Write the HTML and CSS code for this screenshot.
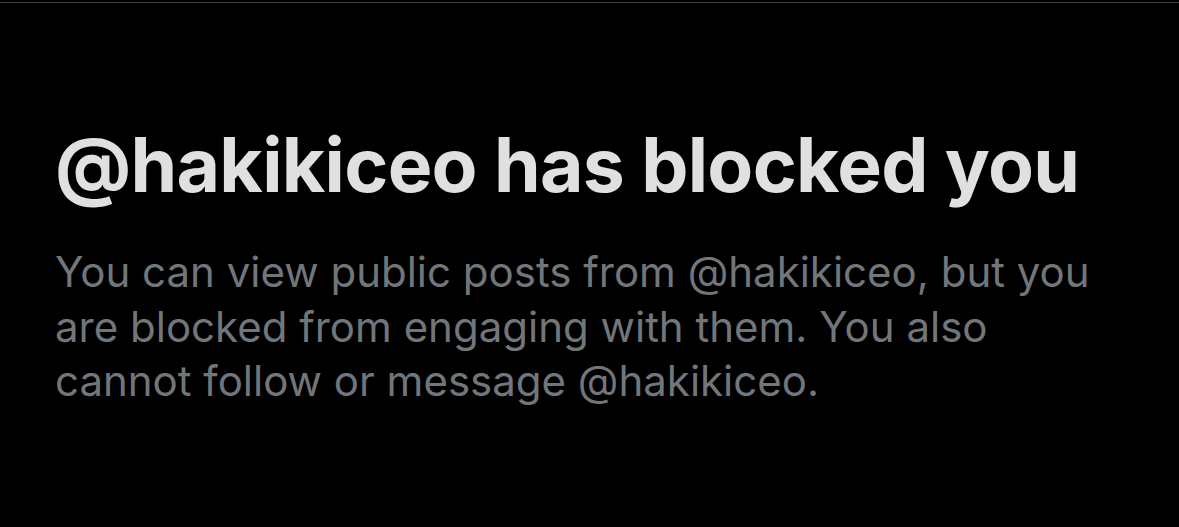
FILE: index.html
```html
<!DOCTYPE html>
<html>
<head>
<meta charset="utf-8">
<link rel="stylesheet" href="styles.css">
</head>
<body>
<div class="screen">
  <div class="divider"></div>
  <section class="blocked">
    <h1 class="title">@hakikiceo has blocked you</h1>
    <p class="desc">You can view public posts from @hakikiceo, but you are blocked from engaging with them. You also cannot follow or message @hakikiceo.</p>
  </section>
</div>
</body>
</html>
```
FILE: styles.css
```css
html, body {
  margin: 0;
  padding: 0;
  background: #000;
}
.screen {
  width: 1179px;
  height: 527px;
  background: #000;
  overflow: hidden;
  padding-top: 2px;
  box-sizing: border-box;
}
.divider {
  height: 1px;
  background: #3d3d40;
}
.blocked {
  padding: 117px 40px 0 55px;
}
.title {
  margin: 0;
  font-family: Inter, "Noto Sans", sans-serif;
  font-weight: 700;
  font-size: 75px;
  line-height: 90px;
  letter-spacing: -0.7px;
  color: #e0e0e0;
  white-space: nowrap;
}
.desc {
  margin: 35px 0 0 0;
  width: 1060px;
  font-family: Inter, "Noto Sans", sans-serif;
  font-weight: 400;
  font-size: 42px;
  line-height: 54.5px;
  letter-spacing: 0;
  color: #71767b;
}
```
